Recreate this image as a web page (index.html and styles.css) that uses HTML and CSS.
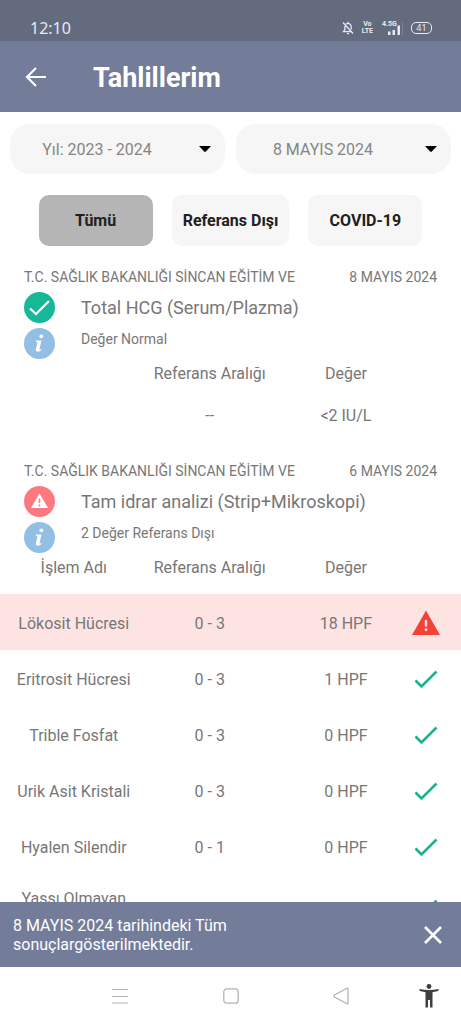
FILE: index.html
```html
<!DOCTYPE html>
<html lang="tr">
<head>
<meta charset="utf-8">
<meta name="viewport" content="width=device-width, initial-scale=1">
<title>Tahlillerim</title>
<link rel="stylesheet" href="styles.css">
</head>
<body>
<svg class="defs" aria-hidden="true">
  <symbol id="check" viewBox="0 0 28 28"><path d="M3.500 15.500l6 6L24.500 6.500" fill="none" stroke="currentColor" stroke-width="2.600"/></symbol>
  <symbol id="info" viewBox="0 0 31 31"><circle cx="15.500" cy="15.500" r="15.500" fill="#92bfe3"/><circle cx="17.300" cy="8.300" r="1.900" fill="#fff"/><path d="M12.200 12.400h5.300l-2 8.600q-.2 1 .6.600l1.100-.7.300 1q-1.700 1.800-3.900 1.800-2.200-.1-1.700-2.500l1.600-6.800-1.700-.6z" fill="#fff"/></symbol>
  <symbol id="caret" viewBox="0 0 12 6"><path d="M0 0h12L6.800 5.600q-.8.700-1.600 0z" fill="#000"/></symbol>
</svg>
<div class="screen">
  <div class="status">
    <span class="clock">12:10</span>
    <div class="status-icons">
      <svg width="12" height="14" viewBox="0 0 12 14" fill="none" stroke="#e6eaf4" stroke-width="1.300"><path d="M4 3.300Q6 1.600 8 3.300q1.200 1 1.200 3v2.200M2.900 5v3.500L1.500 10.600h8M1 1.500l10 11M6 .8v1.500M5 12.600h2"/></svg>
      <span class="volte"><span>Vo</span><span>LTE</span></span>
      <span class="signal">
        <span class="signal-label">4.5G</span>
        <svg width="18" height="14" viewBox="0 0 18 14"><path d="M3 10.500h2.500V14H3zM7.500 9H10v5H7.500zM12.500 4.500H15V14h-2.500z" fill="#e6eaf4"/><path d="M17 1h1v13h-1z" fill="#7b8295"/></svg>
      </span>
      <span class="battery">41</span>
    </div>
  </div>

  <header class="appbar">
    <button class="icon-button" aria-label="Geri">
      <svg width="22" height="22" viewBox="0 0 22 22" fill="none" stroke="#fff" stroke-width="2.200"><path d="M21 11H2.500M11 2l-9 9 9 9"/></svg>
    </button>
    <h1 class="title">Tahlillerim</h1>
  </header>

  <main class="content">
    <div class="filters">
      <div class="picker">
        <select class="picker-select" aria-label="Yıl"><option>Yıl: 2023 - 2024</option></select>
        <svg class="picker-caret" width="12" height="6"><use href="#caret"/></svg>
      </div>
      <div class="picker">
        <select class="picker-select" aria-label="Tarih"><option>8 MAYIS 2024</option></select>
        <svg class="picker-caret" width="12" height="6"><use href="#caret"/></svg>
      </div>
    </div>

    <div class="chips">
      <button class="chip chip-active">Tümü</button>
      <button class="chip">Referans Dışı</button>
      <button class="chip">COVID-19</button>
    </div>

    <section class="report report-summary">
      <div class="report-source"><span>T.C. SAĞLIK BAKANLIĞI SİNCAN EĞİTİM VE</span><span>8 MAYIS 2024</span></div>
      <div class="report-head">
        <div class="report-icons">
          <svg width="31" height="31" viewBox="0 0 31 31"><circle cx="15.500" cy="15.500" r="15.500" fill="#17b897"/><path d="M6 16.500l6 5.500L25 9" fill="none" stroke="#fff" stroke-width="2.200"/></svg>
          <svg width="31" height="31"><use href="#info"/></svg>
        </div>
        <div>
          <h2 class="report-name">Total HCG (Serum/Plazma)</h2>
          <p class="report-state">Değer Normal</p>
        </div>
      </div>
      <table class="values">
        <colgroup><col class="col-name"><col class="col-range"><col class="col-value"><col class="col-icon"></colgroup>
        <thead><tr><th></th><th>Referans Aralığı</th><th class="value">Değer</th><th></th></tr></thead>
        <tbody><tr><td></td><td>--</td><td class="value">&lt;2 IU/L</td><td></td></tr></tbody>
      </table>
    </section>

    <section class="report">
      <div class="report-source"><span>T.C. SAĞLIK BAKANLIĞI SİNCAN EĞİTİM VE</span><span>6 MAYIS 2024</span></div>
      <div class="report-head">
        <div class="report-icons">
          <svg width="31" height="31" viewBox="0 0 31 31"><circle cx="15.500" cy="15.500" r="15.500" fill="#fb7a80"/><path d="M15.500 7.500L24 22H7z" fill="#fff"/><path d="M15.500 12.500v4.500M15.500 18.500v2" stroke="#fb7a80" stroke-width="1.600"/></svg>
          <svg width="31" height="31"><use href="#info"/></svg>
        </div>
        <div>
          <h2 class="report-name">Tam idrar analizi (Strip+Mikroskopi)</h2>
          <p class="report-state">2 Değer Referans Dışı</p>
        </div>
      </div>
      <table class="values">
        <colgroup><col class="col-name"><col class="col-range"><col class="col-value"><col class="col-icon"></colgroup>
        <thead><tr><th>İşlem Adı</th><th>Referans Aralığı</th><th class="value">Değer</th><th></th></tr></thead>
        <tbody>
          <tr class="row-alert"><td>Lökosit Hücresi</td><td>0 - 3</td><td class="value">18 HPF</td><td><svg class="mark" width="28" height="28" viewBox="0 0 28 28"><path d="M14 1.500L28 26H0z" fill="#f44336"/><path d="M14 11v6.500M14 19.500v2.500" stroke="#fde4e3" stroke-width="2.400"/></svg></td></tr>
          <tr><td>Eritrosit Hücresi</td><td>0 - 3</td><td class="value">1 HPF</td><td><svg class="mark" width="28" height="28"><use href="#check"/></svg></td></tr>
          <tr><td>Trible Fosfat</td><td>0 - 3</td><td class="value">0 HPF</td><td><svg class="mark" width="28" height="28"><use href="#check"/></svg></td></tr>
          <tr><td>Urik Asit Kristali</td><td>0 - 3</td><td class="value">0 HPF</td><td><svg class="mark" width="28" height="28"><use href="#check"/></svg></td></tr>
          <tr><td>Hyalen Silendir</td><td>0 - 1</td><td class="value">0 HPF</td><td><svg class="mark" width="28" height="28"><use href="#check"/></svg></td></tr>
          <tr class="row-tall"><td>Yassı Olmayan</td><td></td><td></td><td><svg class="mark" width="28" height="28"><use href="#check"/></svg></td></tr>
        </tbody>
      </table>
    </section>
  </main>

  <div class="snackbar" role="status">
    <p class="snackbar-text">8 MAYIS 2024 tarihindeki Tüm sonuçlargösterilmektedir.</p>
    <button class="icon-button" aria-label="Kapat">
      <svg width="18" height="18" viewBox="0 0 18 18" fill="none" stroke="#fff" stroke-width="2.600"><path d="M1 1l16 16M17 1L1 17"/></svg>
    </button>
  </div>

  <nav class="navbar">
    <button class="icon-button" aria-label="Son uygulamalar"><svg width="16" height="16" viewBox="0 0 16 16" stroke="#b4b4b4" stroke-width="1.200"><path d="M0 1.500h16M0 8.500h16M0 15h16"/></svg></button>
    <button class="icon-button" aria-label="Ana ekran"><svg width="16" height="16" viewBox="0 0 16 16" fill="none" stroke="#b4b4b4" stroke-width="1.300"><rect x=".8" y=".8" width="14.400" height="14.400" rx="3"/></svg></button>
    <button class="icon-button" aria-label="Geri"><svg width="16" height="18" viewBox="0 0 16 18" fill="none" stroke="#b4b4b4" stroke-width="1.300" stroke-linejoin="round"><path d="M14 1.200L1.500 8q-1.200 1 0 2L14 16.800q1 .2 1-.8V2q0-1-1-.8z"/></svg></button>
    <button class="icon-button" aria-label="Erişilebilirlik"><svg width="20" height="24" viewBox="0 0 20 24" fill="#3f3f3f"><circle cx="10" cy="2.500" r="2.400"/><path d="M.3 5L.8 7 6.500 8.200V23.500H9V16h2v7.500h2.500V8.200L19.200 7l.5-2Q10 7.200.3 5z"/></svg></button>
  </nav>
</div>
</body>
</html>
```
FILE: styles.css
```css
* {
  box-sizing: border-box;
}

body {
  margin: 0;
  background: #fff;
  color: #777;
  font: 400 16px/19px Roboto, "Noto Sans", sans-serif;
}

h1, h2, p {
  margin: 0;
}

svg {
  display: block;
}

.defs {
  display: none;
}

.screen {
  display: flex;
  flex-direction: column;
  height: 100vh;
}

.icon-button {
  display: flex;
  padding: 0;
  border: 0;
  background: none;
}

/* System status bar */
.status {
  display: flex;
  justify-content: space-between;
  align-items: center;
  padding: 16px 29px 1px 30px;
  background: #646b7e;
  color: #e6eaf4;
  font-family: "Noto Sans", sans-serif;
}

.clock {
  font-size: 16px;
  line-height: 24px;
}

.status-icons {
  display: flex;
  align-items: center;
  gap: 8px;
}

.volte {
  display: grid;
  justify-items: center;
  font: 700 7px/7px Roboto, sans-serif;
}

.signal {
  position: relative;
  padding-left: 4px;
}

.signal-label {
  position: absolute;
  top: 0;
  left: 1px;
  font: 700 7px/7px Roboto, sans-serif;
}

.battery {
  width: 21px;
  border: 1px solid #e6eaf4;
  border-radius: 5px;
  font-size: 9px;
  line-height: 10px;
  text-align: center;
}

/* App bar */
.appbar {
  display: flex;
  align-items: center;
  gap: 46px;
  padding: 18px 25px 17px;
  background: #737c98;
}

.title {
  padding-top: 2px;
  color: #fff;
  font-size: 27px;
  font-weight: 700;
  line-height: 34px;
}

.content {
  flex: 1;
  min-height: 0;
  overflow: hidden;
}

/* Filters */
.filters {
  display: grid;
  grid-template-columns: 1fr 1fr;
  gap: 11px;
  padding: 12px 10px 0;
}

.picker {
  display: grid;
  align-items: center;
}

.picker-select,
.picker-caret {
  grid-area: 1 / 1;
}

.picker-select {
  width: 100%;
  height: 50px;
  padding: 0 41px 0 0;
  border: 0;
  border-radius: 20px;
  appearance: none;
  background: #f6f6f6;
  color: #858585;
  font: inherit;
  text-align-last: center;
}

.picker-caret {
  justify-self: end;
  margin-right: 14px;
  pointer-events: none;
}

.chips {
  display: flex;
  justify-content: center;
  gap: 19px;
  padding: 21px 10px;
}

.chip {
  min-width: 114px;
  height: 51px;
  padding: 0 11px;
  border: 0;
  border-radius: 10px;
  background: #f6f6f6;
  color: #212121;
  font: 700 16px/19px Roboto, sans-serif;
}

.chip-active {
  background: #b5b5b5;
}

/* Reports */
.report-summary {
  padding-bottom: 30px;
}

.report-source {
  display: flex;
  justify-content: space-between;
  padding: 0 24px 5px;
  font-size: 14px;
  line-height: 20px;
}

.report-head {
  display: flex;
  gap: 26px;
  padding: 0 24px;
}

.report-icons {
  display: grid;
  gap: 5px;
}

.report-name {
  font-size: 18px;
  font-weight: 400;
  line-height: 32px;
}

.report-state {
  padding-top: 5px;
  font-size: 14px;
  line-height: 20px;
}

.values {
  width: 100%;
  border-collapse: collapse;
  table-layout: fixed;
  text-align: center;
}

.col-name { width: 32%; }
.col-range { width: 27%; }
.col-value { width: 26%; }
.col-icon { width: 15%; }

.values th {
  height: 41px;
  padding: 0 0 13px;
  font-weight: 400;
}

.values td {
  padding: 15px 0 13px;
}

.values .value {
  padding-left: 28px;
}

.report-summary td {
  padding: 6px 0;
}

.row-alert {
  background: #fde4e3;
}

.row-tall {
  height: 66px;
}

.row-tall td:first-child {
  vertical-align: top;
}

.mark {
  margin: 0 auto;
  color: #1fb18d;
}

/* Snackbar */
.snackbar {
  display: flex;
  justify-content: space-between;
  align-items: center;
  padding: 14px 19px 13px 13px;
  background: #737c98;
  color: #fff;
}

.snackbar-text {
  max-width: 240px;
}

/* System navigation */
.navbar {
  display: grid;
  grid-template-columns: 24% 24% 24% 14%;
  align-items: center;
  justify-content: end;
  justify-items: center;
  height: 57px;
}
```
